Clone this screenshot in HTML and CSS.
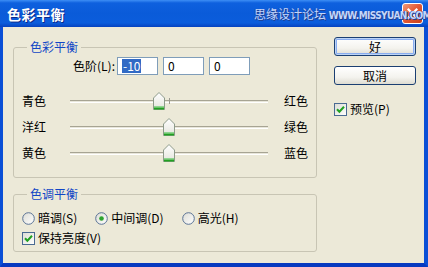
FILE: index.html
```html
<!DOCTYPE html>
<html lang="zh-CN">
<head>
<meta charset="utf-8">
<title>色彩平衡</title>
<link rel="stylesheet" href="styles.css">
</head>
<body>
<div class="window">
  <div class="titlebar">
    <span class="title">色彩平衡</span>
    <span class="watermark">思缘设计论坛 <span class="wm-url">WWW.MISSYUAN.COM</span></span>
    <span class="close">
      <svg width="13" height="13" viewBox="0 0 13 13"><path d="M2.5 2.5 L10.5 10.5 M10.5 2.5 L2.5 10.5" stroke="#fff" stroke-width="2.2" stroke-linecap="square"/></svg>
    </span>
  </div>
  <div class="client">
    <div class="main">
      <fieldset class="group g1">
        <legend>色彩平衡</legend>
        <div class="levels">
          <span class="lv-label">色阶(L):</span>
          <span class="field"><span class="sel">-10</span></span>
          <span class="field">0</span>
          <span class="field">0</span>
        </div>
        <div class="sliders">
          <div class="slider-row">
            <span class="lab-l">青色</span>
            <div class="track"><i class="tick"></i><svg class="thumb" style="left:45%" width="12" height="18" viewBox="0 0 12 18"><use href="#thumb"/></svg></div>
            <span class="lab-r">红色</span>
          </div>
          <div class="slider-row">
            <span class="lab-l">洋红</span>
            <div class="track"><i class="tick"></i><svg class="thumb" style="left:50%" width="12" height="18" viewBox="0 0 12 18"><use href="#thumb"/></svg></div>
            <span class="lab-r">绿色</span>
          </div>
          <div class="slider-row">
            <span class="lab-l">黄色</span>
            <div class="track"><i class="tick"></i><svg class="thumb" style="left:50%" width="12" height="18" viewBox="0 0 12 18"><use href="#thumb"/></svg></div>
            <span class="lab-r">蓝色</span>
          </div>
        </div>
      </fieldset>
      <fieldset class="group g2">
        <legend>色调平衡</legend>
        <div class="radios">
          <span class="opt"><svg class="radio" width="13" height="13" viewBox="0 0 13 13"><use href="#radio-off"/></svg>暗调(S)</span>
          <span class="opt"><svg class="radio" width="13" height="13" viewBox="0 0 13 13"><use href="#radio-on"/></svg>中间调(D)</span>
          <span class="opt"><svg class="radio" width="13" height="13" viewBox="0 0 13 13"><use href="#radio-off"/></svg>高光(H)</span>
        </div>
        <div class="opt keep"><svg class="cb" width="13" height="13" viewBox="0 0 13 13"><use href="#checkbox"/></svg>保持亮度(V)</div>
      </fieldset>
    </div>
    <div class="side">
      <div class="btn default">好</div>
      <div class="btn">取消</div>
      <div class="opt preview"><svg class="cb" width="13" height="13" viewBox="0 0 13 13"><use href="#checkbox"/></svg>预览(P)</div>
    </div>
  </div>
</div>

<svg class="defs" width="0" height="0">
  <defs>
    <linearGradient id="thg" x1="0" y1="0" x2="0" y2="1">
      <stop offset="0" stop-color="#ffffff"/>
      <stop offset="1" stop-color="#e4e4dc"/>
    </linearGradient>
    <linearGradient id="rg" x1="0" y1="0" x2="1" y2="1">
      <stop offset="0" stop-color="#dcdcd4"/>
      <stop offset="1" stop-color="#ffffff"/>
    </linearGradient>
    <g id="thumb">
      <path d="M6 0.5 L11.5 6 V17.5 H0.5 V6 Z" fill="url(#thg)" stroke="#8d9a8a"/>
      <rect x="1" y="14" width="10" height="1.5" fill="#8fd68f"/>
      <rect x="1" y="15.5" width="10" height="2" fill="#21a121"/>
    </g>
    <g id="radio-off">
      <circle cx="6.5" cy="6.5" r="5.8" fill="url(#rg)" stroke="#5a7396" stroke-width="1"/>
    </g>
    <g id="radio-on">
      <circle cx="6.5" cy="6.5" r="5.8" fill="url(#rg)" stroke="#5a7396" stroke-width="1"/>
      <circle cx="6.5" cy="6.5" r="2.3" fill="#2da42d"/>
    </g>
    <g id="checkbox">
      <rect x="0.5" y="0.5" width="12" height="12" fill="url(#rg)" stroke="#4a6a92"/>
      <path d="M3 6.2 L5.4 8.8 L10 3.8" fill="none" stroke="#21a121" stroke-width="2"/>
    </g>
  </defs>
</svg>
</body>
</html>
```

FILE: styles.css
```css
html, body {
  margin: 0;
  padding: 0;
  background: #ece9d8;
}

body {
  font-family: "Noto Sans CJK SC", "Noto Sans", sans-serif;
  font-size: 12px;
  line-height: 14px;
  color: #000;
}

.defs {
  position: absolute;
  width: 0;
  height: 0;
}

.window {
  width: 428px;
  height: 267px;
  display: flex;
  flex-direction: column;
  box-sizing: border-box;
}

.titlebar {
  position: relative;
  height: 27px;
  flex: none;
  display: flex;
  align-items: center;
  background: linear-gradient(to bottom, #3d8ef5 0, #0e60de 3px, #0a5bd9 50%, #0b5ddc 85%, #0642bf 100%);
}

.title {
  padding-left: 7px;
  font-size: 14px;
  font-weight: bold;
  color: #fff;
  letter-spacing: 0.5px;
  text-shadow: 1px 1px 0 #0b2a8a;
}

.watermark {
  position: absolute;
  left: 254px;
  top: 7px;
  z-index: 2;
  font-size: 12px;
  line-height: 14px;
  color: #c3d6fa;
  text-shadow: 1px 1px 0 #213f8f, -1px 0 0 #2a55b8;
  white-space: nowrap;
}

.wm-url {
  font-family: "DejaVu Sans Condensed", "Liberation Sans Narrow", "Liberation Sans", sans-serif;
  font-size: 10px;
  font-weight: bold;
  letter-spacing: -0.6px;
}

.close {
  margin-left: auto;
  margin-right: 5px;
  width: 19px;
  height: 19px;
  border: 1px solid #fff;
  border-radius: 3px;
  background: linear-gradient(135deg, #f09a7a 0%, #e35a36 45%, #c8411c 100%);
  display: flex;
  align-items: center;
  justify-content: center;
  position: relative;
  z-index: 1;
}

.client {
  flex: 1;
  display: flex;
  box-sizing: border-box;
  padding: 10px 8px 0 10px;
  border-left: 3px solid #0a4fd6;
  border-right: 4px solid #0a4fd6;
  border-bottom: 4px solid #0739c0;
  background: #ece9d8;
}

.main {
  width: 304px;
  padding-top: 3px;
}

.group {
  margin: 0;
  padding: 0;
  min-width: 0;
  width: 304px;
  box-sizing: border-box;
  border: 1px solid #c8c5b4;
  border-radius: 3px;
}

.group legend {
  margin-left: 13px;
  padding: 0 3px;
  color: #1146c6;
  line-height: 14px;
}

.g1 {
  padding-bottom: 11px;
}

.g2 {
  margin-top: 9px;
  padding-bottom: 6px;
}

.levels {
  margin-top: 3px;
  height: 18px;
  display: flex;
  align-items: center;
  padding-left: 50px;
}

.lv-label {
  width: 51px;
  text-align: right;
  margin-right: 2px;
}

.field {
  width: 41px;
  height: 18px;
  box-sizing: border-box;
  border: 1px solid #7f9db9;
  background: #fff;
  padding-left: 4px;
  margin-right: 5px;
  display: flex;
  align-items: center;
}

.sel {
  background: #316ac5;
  color: #fff;
  padding: 0 1px;
}

.sliders {
  margin-top: 13px;
}

.slider-row {
  height: 26px;
  display: flex;
  align-items: center;
  padding-left: 8px;
}

.lab-l {
  width: 48px;
}

.track {
  position: relative;
  width: 198px;
  height: 3px;
  box-sizing: border-box;
  background: #e8e6da;
  border-top: 1px solid #a7a493;
  border-bottom: 1px solid #ffffff;
}

.tick {
  position: absolute;
  left: 50%;
  top: -3px;
  width: 1px;
  height: 6px;
  background: #9b9a90;
}

.thumb {
  position: absolute;
  top: -9px;
  margin-left: -6px;
  display: block;
}

.lab-r {
  margin-left: 16px;
}

.radios {
  margin-top: 10px;
  display: flex;
  gap: 18px;
  padding-left: 8px;
}

.opt {
  display: flex;
  align-items: center;
  height: 14px;
}

.radio, .cb {
  margin-right: 3px;
  flex: none;
}

.keep {
  margin-top: 6px;
  padding-left: 8px;
}

.side {
  margin-left: 17px;
  width: 82px;
  display: flex;
  flex-direction: column;
}

.btn {
  width: 82px;
  height: 19px;
  box-sizing: border-box;
  border: 1px solid #1b3f72;
  border-radius: 3px;
  background: linear-gradient(to bottom, #ffffff 0%, #f4f3ee 60%, #dedcd2 100%);
  display: flex;
  align-items: center;
  justify-content: center;
  line-height: 14px;
}

.btn.default {
  box-shadow: inset 0 0 0 1px #bcd4f6, inset 0 0 0 2px #89adf0;
}

.btn + .btn {
  margin-top: 10px;
}

.preview {
  margin-top: 17px;
}
```
